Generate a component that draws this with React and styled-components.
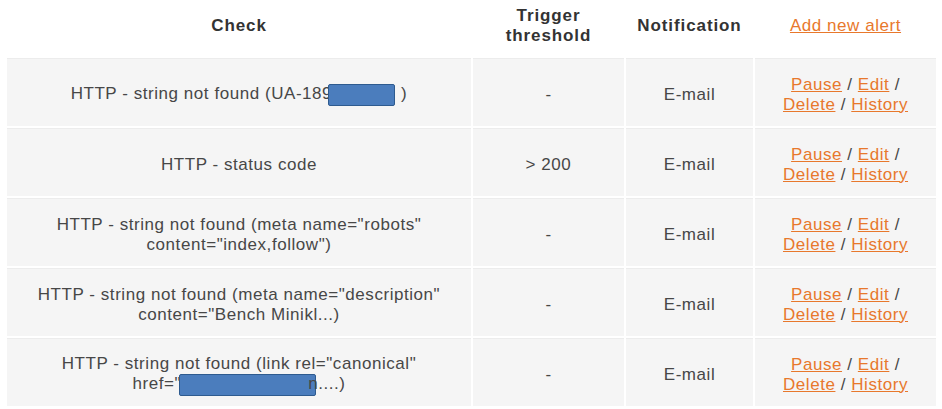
import React from 'react'
import styled, { createGlobalStyle } from 'styled-components'

const GlobalStyle = createGlobalStyle`
    html, body {
        margin: 0;
        padding: 0;
        background: #ffffff;
    }
    body {
        font-family: "Liberation Sans", Arial, sans-serif;
    }
`

const Page = styled.div`
    width: 942px;
    height: 409px;
    overflow: hidden;
    padding: 0 4px 0 5px;
    box-sizing: border-box;
`

const Table = styled.table`
    width: 100%;
    border-collapse: separate;
    border-spacing: 2px;
    table-layout: fixed;
    font-size: 17px;
    line-height: 20px;
    letter-spacing: 0.55px;
    color: #474747;
`

const HeadCell = styled.th`
    height: 54px;
    padding: 0 0 6px;
    box-sizing: border-box;
    font-weight: ${p => (p.$plain ? 'normal' : 'bold')};
    color: #333333;
    letter-spacing: ${p => (p.$plain ? '0.55px' : '0.9px')};
    text-align: center;
    vertical-align: middle;
    background: #ffffff;
`

const Cell = styled.td`
    height: 68px;
    padding: 4px 6px 0;
    box-sizing: border-box;
    text-align: center;
    vertical-align: middle;
    background: #f5f5f5;
    border-top: 1px solid #ececec;
`

const Link = styled.a`
    color: #e8782c;
    text-decoration: underline;
    cursor: pointer;
`

const Redacted = styled.span`
    display: inline-block;
    width: ${p => p.$w}px;
    height: 22px;
    margin-left: ${p => p.$ml || 0}px;
    margin-right: ${p => p.$mr || 0}px;
    vertical-align: -7px;
    background: #4b7dbd;
    border: 1px solid #2e5b8f;
    border-radius: 2px;
    box-sizing: border-box;
`

const alerts = [
    { check: <>HTTP - string not found (UA-189<Redacted $w={67} $ml={-4} $mr={6} />)</>, threshold: '-' },
    { check: 'HTTP - status code', threshold: '> 200' },
    { check: <>HTTP - string not found (meta name="robots"<br />content="index,follow")</>, threshold: '-' },
    { check: <>HTTP - string not found (meta name="description"<br />content="Bench Minikl...)</>, threshold: '-' },
    { check: <>HTTP - string not found (link rel="canonical"<br />href="<Redacted $w={137} $ml={-2} $mr={-8} />n....)</>, threshold: '-' },
]

const Actions = () => (
    <>
        <Link>Pause</Link> / <Link>Edit</Link> /<br />
        <Link>Delete</Link> / <Link>History</Link>
    </>
)

export default function App() {
    return (
        <Page>
            <GlobalStyle />
            <Table>
                <colgroup>
                    <col style={{ width: 464 }} />
                    <col style={{ width: 151 }} />
                    <col style={{ width: 127 }} />
                    <col />
                </colgroup>
                <thead>
                    <tr>
                        <HeadCell>Check</HeadCell>
                        <HeadCell>Trigger<br />threshold</HeadCell>
                        <HeadCell>Notification</HeadCell>
                        <HeadCell $plain>
                            <Link>Add new alert</Link>
                        </HeadCell>
                    </tr>
                </thead>
                <tbody>
                    {alerts.map((a, i) => (
                        <tr key={i}>
                            <Cell>{a.check}</Cell>
                            <Cell>{a.threshold}</Cell>
                            <Cell>E-mail</Cell>
                            <Cell><Actions /></Cell>
                        </tr>
                    ))}
                </tbody>
            </Table>
        </Page>
    )
}
